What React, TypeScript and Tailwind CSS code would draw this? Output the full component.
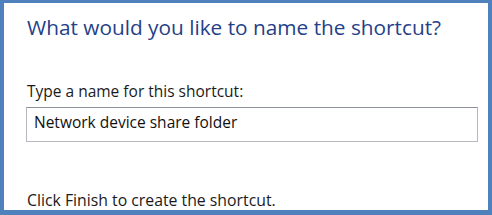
import React from "react";

export default function App() {
  return (
    <div className="w-[492px] h-[215px] box-border border-[#4f81bd] border-t-[3px] border-l-4 border-r-4 border-b-[5px] bg-white flex flex-col" style={{ fontFamily: '"Open Sans", "Noto Sans", sans-serif' }}>
      <div className="pl-[23px] pt-[10px] text-[20.8px] leading-[28px] text-[#253f88]">
        What would you like to name the shortcut?
      </div>
      <div className="pl-[23px] pt-[40px] text-[15.5px] leading-[20px] text-[#1a1a1a]">
        Type a name for this shortcut:
      </div>
      <div className="ml-[22px] mr-[10px] mt-[6px] h-[35px] box-border border border-[#b5b9bf] border-t-[#8e9399] pl-[7px] pt-[4px] text-[15.5px] leading-[20px] text-[#111]">
        Network device share folder
      </div>
      <div className="pl-[23px] mt-auto text-[15.8px] leading-[20px] text-[#1a1a1a]">
        Click Finish to create the shortcut.
      </div>
    </div>
  );
}
